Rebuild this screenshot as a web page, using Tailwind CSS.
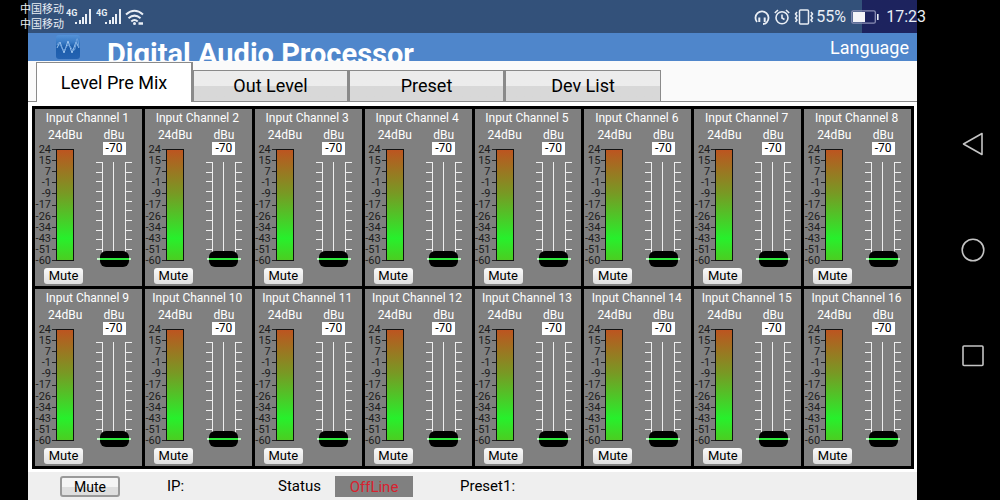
<!DOCTYPE html>
<html lang="en">
<head>
<meta charset="utf-8">
<meta name="viewport" content="width=device-width, initial-scale=1">
<title>Digital Audio Processor</title>
<script src="https://cdn.jsdelivr.net/npm/@tailwindcss/browser@4"></script>
</head>
<body class="bg-black font-['Roboto','Noto_Sans_CJK_SC',sans-serif] text-black">
<div class="flex min-h-screen pl-7">
  <div class="flex min-w-0 flex-1 flex-col bg-white">

    <!-- Phone status bar -->
    <div class="flex h-[33px] shrink-0 items-center bg-linear-to-l from-[#1d235e] from-[55px] to-[#33517a] to-[55px] text-[#e9eef5]">
      <div class="-ml-2 w-[46px] text-[11px] leading-[15px] whitespace-nowrap"><div>中国移动</div><div>中国移动</div></div>
      <svg class="h-[20px] w-[28px] shrink-0" viewBox="0 0 28 20" fill="currentColor"><text x="0" y="9" font-size="9" font-weight="700">4G</text><path d="M9 15h2v2H9zM13 13h2v4h-2zM16 10h2v7h-2zM19 7h2v10h-2zM23 2h2v15h-2z"/></svg>
      <svg class="ml-[2px] h-[20px] w-[28px] shrink-0" viewBox="0 0 28 20" fill="currentColor"><text x="0" y="9" font-size="9" font-weight="700">4G</text><path d="M9 15h2v2H9zM13 13h2v4h-2zM16 10h2v7h-2zM19 7h2v10h-2zM23 2h2v15h-2z"/></svg>
      <svg class="ml-px h-[18px] w-[20px] shrink-0" viewBox="0 0 20 18" fill="none" stroke="currentColor" stroke-width="2"><path d="M1 6.500Q9.500-1 18 6.500M3.500 10.200Q9.500 5 15.500 10.200M6.300 13.500Q9.500 10.500 12.700 13.500"/><circle cx="9.500" cy="15.500" r="1.500" fill="currentColor" stroke="none"/><path d="M13.500 15.500h4.500" stroke-width="2.500"/></svg>
      <div class="-mr-[9px] ml-auto flex items-center">
        <svg class="h-4 w-4" viewBox="0 0 16 16" fill="none" stroke="currentColor" stroke-width="1.800"><path d="M3 13A6.500 6.500 0 1 1 13 13Q12 15 9 15"/><path d="M5.300 8.500v4.500M10.700 8.500v4.500" stroke-width="2"/></svg>
        <svg class="ml-1 h-4 w-4" viewBox="0 0 16 16" fill="none" stroke="currentColor" stroke-width="1.600"><circle cx="8" cy="8.700" r="6"/><path d="M8 5.500V9l2.500 1.500M.8 4 4 1M15.200 4 12 1"/></svg>
        <svg class="ml-1 h-4 w-5" viewBox="0 0 20 16" fill="none" stroke="currentColor" stroke-width="1.500"><rect x="5.500" y="1" width="9" height="14" rx="1"/><path d="m3 3-1.500 2L3 7 1.500 9 3 11l-1.500 2M17 3l1.500 2L17 7l1.500 2-1.500 2 1.500 2"/></svg>
        <span class="ml-[2px] w-[35px] text-base">55%</span>
        <svg class="h-[14px] w-[28px]" viewBox="0 0 28 14" fill="none"><rect x=".8" y=".8" width="23.500" height="12.400" rx="1.500" stroke="#8b8fb5" stroke-width="1.300"/><path d="M2 2h12v10H2z" fill="#f4f4f8"/><path d="M26.800 4v6" stroke="#e9eef5" stroke-width="1.600"/></svg>
        <span class="ml-[7px] text-base">17:23</span>
      </div>
    </div>

    <!-- App header -->
    <header class="flex h-[28px] shrink-0 items-start overflow-hidden bg-[#4f86cb] pr-2 pl-7 text-white">
      <svg class="mt-[2px] h-6 w-6 shrink-0" viewBox="0 0 24 24"><defs><linearGradient id="logo" x2="0" y2="1"><stop stop-color="#5593d8"/><stop offset=".3" stop-color="#3a7cc6"/><stop offset=".5" stop-color="#1c5dab"/><stop offset="1" stop-color="#2463b2"/></linearGradient></defs><rect width="24" height="24" rx="3" fill="url(#logo)"/><path d="M1 13 4 7l4 11 4-12 4 12 4-11 3 6" fill="none" stroke="#9cc4ee" stroke-width="1"/><path d="M1 10q2-5 4 1t4 3 3-4 4 4 4-6 3 4" fill="none" stroke="#6b9fdc" stroke-width="1"/></svg>
      <h1 class="ml-[27px] pt-[5px] text-[29px] leading-8 font-bold whitespace-nowrap">Digital Audio Processor</h1>
      <button type="button" class="ml-auto pt-[3px] text-lg leading-6">Language</button>
    </header>

    <!-- Tabs -->
    <div role="tablist" class="flex h-[41px] shrink-0 items-end border-b border-[#8a8a8a] bg-[#fafafa] pl-2 text-lg">
      <button role="tab" aria-selected="true" type="button" class="-mb-px h-10 w-[157px] border border-r-2 border-b-0 border-[#8a8a8a] bg-white">Level Pre Mix</button>
      <button role="tab" type="button" class="h-[31px] w-[156px] border border-r-2 border-b-0 border-[#8a8a8a] bg-linear-to-b from-[#ececec] from-50% to-[#d8d8d8] to-50%">Out Level</button>
      <button role="tab" type="button" class="h-[31px] w-[156px] border border-r-2 border-b-0 border-[#8a8a8a] bg-linear-to-b from-[#ececec] from-50% to-[#d8d8d8] to-50%">Preset</button>
      <button role="tab" type="button" class="h-[31px] w-[156px] border border-b-0 border-[#8a8a8a] bg-linear-to-b from-[#ececec] from-50% to-[#d8d8d8] to-50%">Dev List</button>
    </div>

    <!-- Channel strips -->
    <main class="pt-1 pr-[3px] pb-[3px] pl-1">
      <div id="channels" class="grid grid-cols-8 gap-[3px] bg-black p-[3px]"></div>
    </main>

    <!-- Footer -->
    <footer class="flex flex-1 items-center bg-[#efefef] pt-px pl-8 text-[15px]">
      <button type="button" class="h-[21px] w-[60px] rounded-[3px] border-2 border-[#999] bg-linear-to-b from-[#f4f4f4] from-50% to-[#dedede] to-50% text-sm leading-[18px]">Mute</button>
      <span class="ml-[47px] w-[111px]">IP:</span>
      <span class="w-[57px]">Status</span>
      <span class="h-[21px] w-[78px] bg-[#808080] text-center leading-[22px] text-[#d8222f]">OffLine</span>
      <span class="ml-[47px]">Preset1:</span>
    </footer>
  </div>

  <!-- Android navigation -->
  <nav class="flex w-[83px] shrink-0 flex-col items-center justify-center gap-[82px] pl-7 text-[#c4c4c4]">
    <button type="button" aria-label="Back"><svg class="h-6 w-6" viewBox="0 0 24 24" fill="none" stroke="currentColor" stroke-width="1.600" stroke-linejoin="round"><path d="M21 1.500v21L2.500 12z"/></svg></button>
    <button type="button" aria-label="Home"><svg class="h-6 w-6" viewBox="0 0 24 24" fill="none" stroke="currentColor" stroke-width="1.600"><circle cx="12" cy="12" r="10.800"/></svg></button>
    <button type="button" aria-label="Recent apps"><svg class="h-6 w-6" viewBox="0 0 24 24" fill="none" stroke="currentColor" stroke-width="1.600"><rect x="2" y="2" width="20" height="19.500" rx="1"/></svg></button>
  </nav>
</div>

<template id="strip">
  <section class="bg-[#808080] pt-px pb-[2px]">
    <h2 class="pr-[2px] text-center text-xs leading-[17px] whitespace-nowrap text-white"></h2>
    <div class="flex gap-[11px]">
      <div class="flex w-[50px] flex-col">
        <div class="h-[17px] pl-[13px] text-xs leading-[17px] text-white">24dBu</div>
        <div class="flex w-[39px] justify-end">
          <ul class="flex h-[122px] flex-col justify-between pr-px text-right text-[11px] leading-[11px] text-[#1c1c1c]">
            <li>24</li><li>15</li><li>7</li><li>-1</li><li>-9</li><li>-17</li><li>-26</li><li>-34</li><li>-43</li><li>-51</li><li>-60</li>
          </ul>
          <svg class="mt-[5px] h-[112px] w-[22px] shrink-0" viewBox="0 0 22 112"><path d="M0 .5h4M0 11.500h4M0 22.500h4M0 33.500h4M0 44.500h4M0 56.500h4M0 67.500h4M0 78.500h4M0 89.500h4M0 100.500h4M0 111.500h4" stroke="#222"/><rect x="4.500" y=".5" width="17" height="111" fill="url(#level)" stroke="#111"/></svg>
        </div>
        <button type="button" class="mt-[2px] ml-[9px] h-4 w-[39px] rounded-[3px] bg-linear-to-b from-[#fafafa] to-[#dfdfdf] text-[13px] leading-4">Mute</button>
      </div>
      <div class="flex w-[36px] flex-col items-center">
        <label class="h-[15px] text-xs leading-[17px] text-white">dBu</label>
        <input type="text" value="-70" class="h-[13px] w-[23px] bg-white text-center text-xs leading-[13px]">
        <div class="mt-[6px] grid">
          <svg class="mt-px h-[98px] w-[36px] [grid-area:1/1]" viewBox="0 0 36 98" fill="none" stroke="#eee"><path d="M6.500 0v97M29.500 0v97M17.500 0v97M0 .5h6M0 10.500h6M0 19.500h6M0 29.500h6M0 39.500h6M0 48.500h6M0 58.500h6M0 68.500h6M0 77.500h6M0 87.500h6M30 .5h6M30 10.500h6M30 19.500h6M30 29.500h6M30 39.500h6M30 48.500h6M30 58.500h6M30 68.500h6M30 77.500h6M30 87.500h6"/><path d="M1 97h34" stroke="#bff5c4" stroke-width="2"/></svg>
          <input type="range" min="-70" max="24" value="-70" class="m-0 h-[106px] w-[36px] appearance-none bg-transparent [direction:rtl] [grid-area:1/1] [writing-mode:vertical-lr] [&::-webkit-slider-thumb]:h-4 [&::-webkit-slider-thumb]:w-[29px] [&::-webkit-slider-thumb]:appearance-none [&::-webkit-slider-thumb]:rounded-[6px] [&::-webkit-slider-thumb]:bg-[linear-gradient(#000_7px,#2ee83c_7px,#2ee83c_9px,#000_9px)]">
        </div>
      </div>
    </div>
  </section>
</template>

<svg class="absolute h-0 w-0" aria-hidden="true"><defs><linearGradient id="level" x1="0" y1="0" x2="0" y2="1"><stop stop-color="#bd5420"/><stop offset=".4" stop-color="#779a24"/><stop offset=".8" stop-color="#27f02c"/><stop offset="1" stop-color="#4ccc22"/></linearGradient></defs></svg>

<script>
  const grid = document.getElementById('channels');
  const strip = document.getElementById('strip');
  for (let n = 1; n <= 16; n++) {
    const node = strip.content.cloneNode(true);
    node.querySelector('h2').textContent = 'Input Channel ' + n;
    const field = node.querySelector('input[type=text]');
    const fader = node.querySelector('input[type=range]');
    field.id = 'gain-' + n;
    node.querySelector('label').htmlFor = field.id;
    fader.setAttribute('aria-label', 'Input Channel ' + n + ' gain');
    fader.addEventListener('input', () => { field.value = fader.value; });
    field.addEventListener('change', () => { fader.value = field.value; });
    grid.append(node);
  }
</script>
</body>
</html>
